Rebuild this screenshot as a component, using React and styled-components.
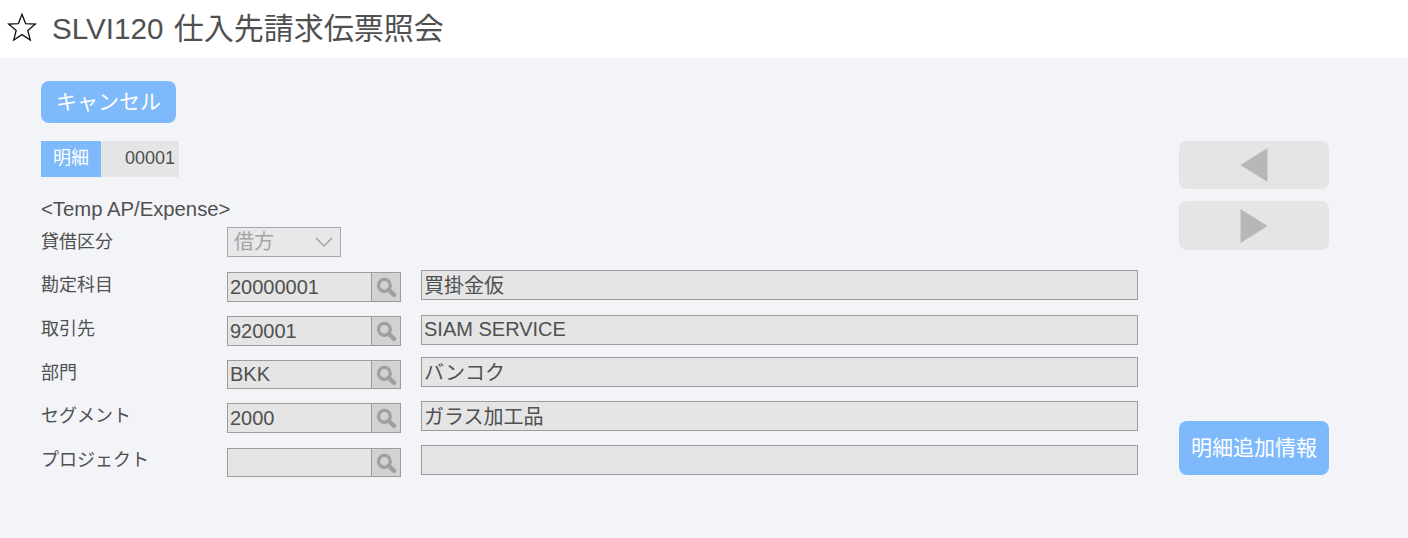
import React from 'react'
import styled, { createGlobalStyle } from 'styled-components'

const rows = [
    { label: '勘定科目', code: '20000001', name: '買掛金仮', top: 13, labelTop: 4, codeTop: 2, codeHeight: 30 },
    { label: '取引先', code: '920001', name: 'SIAM SERVICE', top: 14, labelTop: 3, codeTop: 1, codeHeight: 30 },
    { label: '部門', code: 'BKK', name: 'バンコク', top: 11, labelTop: 5, codeTop: 3, codeHeight: 29 },
    { label: 'セグメント', code: '2000', name: 'ガラス加工品', top: 13, labelTop: 4, codeTop: 2, codeHeight: 30 },
    { label: 'プロジェクト', code: '', name: '', top: 13, labelTop: 4, codeTop: 3, codeHeight: 29 },
]

export default function App() {
    return (
        <>
            <GlobalStyle />
            <Header>
                <Star width="30" height="30" viewBox="0 0 30 30">
                    <path d="M15 2.2 L18.6 11.6 L28.4 12.1 L20.8 18.4 L23.3 28 L15 22.6 L6.7 28 L9.2 18.4 L1.6 12.1 L11.4 11.6 Z" fill="none" stroke="#111" strokeWidth="1.3" strokeLinejoin="miter" />
                </Star>
                <Title><ScreenCode>SLVI120</ScreenCode> 仕入先請求伝票照会</Title>
            </Header>
            <Main>
                <Left>
                    <CancelButton>キャンセル</CancelButton>
                    <DetailRow>
                        <DetailLabel>明細</DetailLabel>
                        <DetailNumber>00001</DetailNumber>
                    </DetailRow>
                    <SectionTitle>&lt;Temp AP/Expense&gt;</SectionTitle>
                    <SelectRow>
                        <SelectLabel>貸借区分</SelectLabel>
                        <SelectBox>
                            <SelectValue>借方</SelectValue>
                            <svg width="18" height="10" viewBox="0 0 18 10">
                                <path d="M1 1 L9 9 L17 1" fill="none" stroke="#999" strokeWidth="1.2" />
                            </svg>
                        </SelectBox>
                    </SelectRow>
                    {rows.map(row => (
                        <FieldRow key={row.label} $top={row.top}>
                            <FieldLabel $top={row.labelTop}>{row.label}</FieldLabel>
                            <CodeGroup $top={row.codeTop} $height={row.codeHeight}>
                                <CodeInput readOnly value={row.code} />
                                <SearchButton>
                                    <SearchIcon width="24" height="24" viewBox="0 0 22 22">
                                        <circle cx="9.5" cy="9.5" r="5.4" fill="none" stroke="#a0a0a0" strokeWidth="3" />
                                        <path d="M13.8 13.8 L18.4 18.2" stroke="#a0a0a0" strokeWidth="4" strokeLinecap="round" />
                                    </SearchIcon>
                                </SearchButton>
                            </CodeGroup>
                            <NameInput readOnly value={row.name} />
                        </FieldRow>
                    ))}
                </Left>
                <Right>
                    <ArrowButton $height={48}>
                        <svg width="28" height="36" viewBox="0 0 28 36">
                            <path d="M0.5 18 L27.5 1 L27.5 35 Z" fill="#b7b7b7" />
                        </svg>
                    </ArrowButton>
                    <ArrowButton $height={49}>
                        <svg width="28" height="36" viewBox="0 0 28 36">
                            <path d="M0.5 1 L27.5 18 L0.5 35 Z" fill="#b7b7b7" />
                        </svg>
                    </ArrowButton>
                    <MoreButton>明細追加情報</MoreButton>
                </Right>
            </Main>
        </>
    )
}

const fontStack = `"Liberation Sans", "Noto Sans CJK JP", sans-serif`

const GlobalStyle = createGlobalStyle`
    html, body {
        margin: 0;
        padding: 0;
        height: 100%;
        background-color: #f3f4f8;
        font-family: ${fontStack};
        color: #505050;
        overflow: hidden;
    }
`
const Header = styled.header`
    display: flex;
    align-items: center;
    height: 58px;
    padding-left: 7px;
    box-sizing: border-box;
    background-color: #fff;
`
const Star = styled.svg`
    flex: none;
    margin: 0 15px 4px 0;
`
const Title = styled.h1`
    margin: 0 0 6px;
    font-size: 30px;
    font-weight: 400;
    color: #505050;
    white-space: nowrap;
`
const ScreenCode = styled.span`
    margin-right: 2px;
    font-size: 29.6px;
`
const Main = styled.main`
    display: flex;
    align-items: flex-start;
    gap: 41px;
    padding: 23px 0 0 41px;
`
const Left = styled.div`
    display: flex;
    flex-direction: column;
    width: 1097px;
`
const CancelButton = styled.button`
    width: 135px;
    height: 42px;
    padding: 0 0 4px;
    border: none;
    border-radius: 8px;
    background-color: #7eb9fb;
    color: #fff;
    font-family: ${fontStack};
    font-size: 21px;
`
const DetailRow = styled.div`
    display: flex;
    height: 36px;
    margin-top: 18px;
    font-size: 18px;
    line-height: 34px;
`
const DetailLabel = styled.div`
    width: 60px;
    background-color: #7eb9fb;
    color: #fff;
    text-align: center;
`
const DetailNumber = styled.div`
    width: 74px;
    padding-right: 4px;
    background-color: #e5e5e5;
    text-align: right;
`
const SectionTitle = styled.div`
    margin-top: 21px;
    height: 22px;
    font-size: 20.3px;
    line-height: 22px;
`
const SelectRow = styled.div`
    display: flex;
    margin-top: 7px;
`
const SelectLabel = styled.div`
    width: 186px;
    font-size: 18px;
    line-height: 30px;
`
const SelectBox = styled.div`
    display: flex;
    align-items: center;
    justify-content: space-between;
    width: 114px;
    height: 30px;
    padding: 0 7px 0 6px;
    box-sizing: border-box;
    border: 1px solid #a8a8a8;
    background-color: #e8e8ea;
    color: #a3a3a3;
    font-size: 20px;
`
const SelectValue = styled.span`
    line-height: 28px;
`
const FieldRow = styled.div`
    display: flex;
    align-items: flex-start;
    height: 31px;
    margin-top: ${props => props.$top}px;
`
const FieldLabel = styled.div`
    width: 186px;
    font-size: 18px;
    line-height: 22px;
    margin-top: ${props => props.$top}px;
`
const CodeGroup = styled.div`
    display: flex;
    width: 174px;
    height: ${props => props.$height}px;
    margin-top: ${props => props.$top}px;
    margin-right: 20px;
`
const CodeInput = styled.input`
    width: 145px;
    height: 100%;
    padding: 0 0 0 2px;
    box-sizing: border-box;
    border: 1px solid #9c9c9c;
    border-radius: 0;
    outline: none;
    background-color: #e5e5e5;
    color: #505050;
    font-family: ${fontStack};
    font-size: 20px;
`
const SearchButton = styled.div`
    display: flex;
    align-items: center;
    justify-content: center;
    width: 29px;
    height: 100%;
    box-sizing: border-box;
    border: 1px solid #9c9c9c;
    border-left: none;
    background-color: #d2d2d2;
`
const SearchIcon = styled.svg`
    filter: blur(0.5px);
`
const NameInput = styled.input`
    width: 717px;
    height: 30px;
    padding: 0 0 2px 2px;
    box-sizing: border-box;
    border: 1px solid #9c9c9c;
    border-radius: 0;
    outline: none;
    background-color: #e5e5e5;
    color: #505050;
    font-family: ${fontStack};
    font-size: 20px;
`
const Right = styled.div`
    display: flex;
    flex-direction: column;
    width: 150px;
    margin-top: 60px;
`
const ArrowButton = styled.div`
    display: flex;
    align-items: center;
    justify-content: center;
    height: ${props => props.$height}px;
    margin-bottom: 12px;
    border-radius: 8px;
    background-color: #e5e5e5;
`
const MoreButton = styled.button`
    height: 54px;
    margin-top: 159px;
    padding: 0 0 4px;
    border: none;
    border-radius: 8px;
    background-color: #7eb9fb;
    color: #fff;
    font-family: ${fontStack};
    font-size: 21px;
`
